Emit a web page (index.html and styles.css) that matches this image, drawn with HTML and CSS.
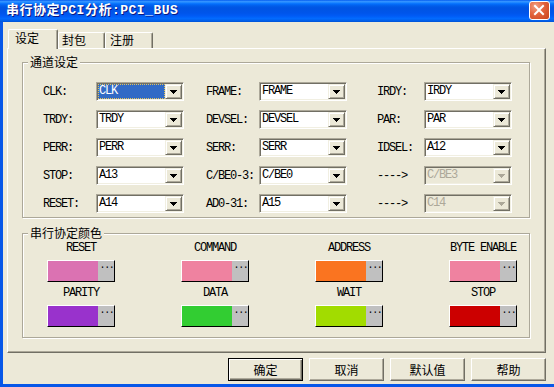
FILE: index.html
```html
<!DOCTYPE html>
<html lang="zh-CN">
<head>
<meta charset="utf-8">
<title>串行协定PCI分析:PCI_BUS</title>
<link rel="stylesheet" href="styles.css">
</head>
<body>
<div class="window">
  <div class="titlebar">
    <span class="title">串行协定PCI分析:PCI_BUS</span>
    <span class="close"><svg width="19" height="17" viewBox="0 0 19 17"><path d="M5 4L13 12M13 4L5 12" stroke="#fff" stroke-width="2" stroke-linecap="square" fill="none"/></svg></span>
  </div>
  <div class="client">
    <div class="tabs">
      <div class="tab active t1">设定</div>
      <div class="tab t2">封包</div>
      <div class="tab t3">注册</div>
    </div>
    <div class="panel">
      <div class="group g1">
        <span class="gtitle">通道设定</span>
        <div class="grid1">
          <span class="lbl">CLK:</span>
          <div class="combo focus"><span class="val"><span class="sel">CLK</span></span><span class="drop"><i class="arrow"></i></span></div>
          <span class="lbl l2">FRAME:</span>
          <div class="combo"><span class="val">FRAME</span><span class="drop"><i class="arrow"></i></span></div>
          <span class="lbl l3">IRDY:</span>
          <div class="combo"><span class="val">IRDY</span><span class="drop"><i class="arrow"></i></span></div>

          <span class="lbl">TRDY:</span>
          <div class="combo"><span class="val">TRDY</span><span class="drop"><i class="arrow"></i></span></div>
          <span class="lbl l2">DEVSEL:</span>
          <div class="combo"><span class="val">DEVSEL</span><span class="drop"><i class="arrow"></i></span></div>
          <span class="lbl l3">PAR:</span>
          <div class="combo"><span class="val">PAR</span><span class="drop"><i class="arrow"></i></span></div>

          <span class="lbl">PERR:</span>
          <div class="combo"><span class="val">PERR</span><span class="drop"><i class="arrow"></i></span></div>
          <span class="lbl l2">SERR:</span>
          <div class="combo"><span class="val">SERR</span><span class="drop"><i class="arrow"></i></span></div>
          <span class="lbl l3">IDSEL:</span>
          <div class="combo"><span class="val">A12</span><span class="drop"><i class="arrow"></i></span></div>

          <span class="lbl">STOP:</span>
          <div class="combo"><span class="val">A13</span><span class="drop"><i class="arrow"></i></span></div>
          <span class="lbl l2">C/BE0-3:</span>
          <div class="combo"><span class="val">C/BE0</span><span class="drop"><i class="arrow"></i></span></div>
          <span class="lbl l3">----&gt;</span>
          <div class="combo disabled"><span class="val">C/BE3</span><span class="drop"><i class="arrow"></i></span></div>

          <span class="lbl">RESET:</span>
          <div class="combo"><span class="val">A14</span><span class="drop"><i class="arrow"></i></span></div>
          <span class="lbl l2">AD0-31:</span>
          <div class="combo"><span class="val">A15</span><span class="drop"><i class="arrow"></i></span></div>
          <span class="lbl l3">----&gt;</span>
          <div class="combo disabled"><span class="val">C14</span><span class="drop"><i class="arrow"></i></span></div>
        </div>
      </div>
      <div class="group g2">
        <span class="gtitle">串行协定颜色</span>
        <div class="grid2">
          <div class="cell"><span class="name">RESET</span><div class="swatch"><span class="color c-reset"></span><span class="more">...</span></div></div>
          <div class="cell"><span class="name">COMMAND</span><div class="swatch"><span class="color c-command"></span><span class="more">...</span></div></div>
          <div class="cell"><span class="name">ADDRESS</span><div class="swatch"><span class="color c-address"></span><span class="more">...</span></div></div>
          <div class="cell"><span class="name">BYTE ENABLE</span><div class="swatch"><span class="color c-byte"></span><span class="more">...</span></div></div>
          <div class="cell"><span class="name">PARITY</span><div class="swatch"><span class="color c-parity"></span><span class="more">...</span></div></div>
          <div class="cell"><span class="name">DATA</span><div class="swatch"><span class="color c-data"></span><span class="more">...</span></div></div>
          <div class="cell"><span class="name">WAIT</span><div class="swatch"><span class="color c-wait"></span><span class="more">...</span></div></div>
          <div class="cell"><span class="name">STOP</span><div class="swatch"><span class="color c-stop"></span><span class="more">...</span></div></div>
        </div>
      </div>
    </div>
    <div class="buttons">
      <button class="btn default">确定</button>
      <button class="btn">取消</button>
      <button class="btn">默认值</button>
      <button class="btn">帮助</button>
    </div>
  </div>
</div>
</body>
</html>
```
FILE: styles.css
```css
* { box-sizing: border-box; }
html, body { margin: 0; padding: 0; }
body {
  width: 554px;
  height: 387px;
  overflow: hidden;
  background: #ECE9D8;
  font-family: "Liberation Mono", "Noto Sans CJK SC", monospace;
  font-size: 12px;
  color: #000;
}
.window {
  width: 554px;
  height: 387px;
  display: flex;
  flex-direction: column;
}
.titlebar {
  flex: none;
  height: 22px;
  display: flex;
  align-items: center;
  justify-content: space-between;
  padding: 0 4px 0 6px;
  background: linear-gradient(to bottom, #0058ee 0%, #3593ff 6%, #288eff 10%, #127dff 14%, #036ffc 18%, #0262ee 24%, #0057e5 32%, #0054e3 40%, #0055eb 60%, #005bf5 72%, #026afe 84%, #0062ef 92%, #0052d6 100%);
}
.title {
  color: #fff;
  font-family: "Liberation Mono", "Noto Sans CJK SC", monospace;
  font-weight: bold;
  font-size: 13px;
  letter-spacing: 0.5px;
  line-height: 16px;
  text-shadow: 1px 1px 0 #0a1883;
}
.close {
  align-self: flex-start;
  margin-top: 1px;
  width: 21px;
  height: 19px;
  display: flex;
  border: 1px solid #fff;
  border-radius: 3px;
  background: radial-gradient(circle at 30% 25%, #f3a084 0%, #e2633d 45%, #c9421b 100%);
}
.client {
  flex: 1;
  display: flex;
  flex-direction: column;
  border-left: 3px solid #0757e8;
  border-bottom: 3px solid #0757e8;
  padding: 7px 8px 0 4px;
}
.tabs {
  position: relative;
  z-index: 1;
  display: flex;
  align-items: flex-end;
  height: 19px;
  margin-left: 1px;
}
.tab {
  height: 16px;
  font-family: "Noto Sans CJK SC", sans-serif;
  font-size: 12px;
  line-height: 14px;
  background: #ECE9D8;
  border-top: 1px solid #fff;
  border-left: 1px solid #fff;
  border-right: 1px solid #716F64;
  box-shadow: inset -1px 0 0 #ACA899;
  border-radius: 2px 2px 0 0;
}
.tab.active {
  height: 20px;
  margin-bottom: -1px;
  padding-top: 1px;
}
.t1 { width: 50px; padding-left: 6px; }
.t2 { width: 47px; padding-left: 3px; }
.t3 { width: 48px; padding-left: 4px; }
.panel {
  height: 305px;
  border: 1px solid;
  border-color: #fff #716F64 #716F64 #fff;
  box-shadow: inset -1px -1px 0 #ACA899;
  padding: 13px 0 0 14px;
}
.group {
  position: relative;
  width: 508px;
  border: 1px solid #ACA899;
  box-shadow: 1px 1px 0 #fff, inset 1px 1px 0 #fff;
}
.g1 {
  height: 156px;
  padding: 19px 0 0 20px;
  margin-bottom: 15px;
}
.g2 {
  height: 105px;
  padding: 7px 0 0 24px;
}
.gtitle {
  position: absolute;
  left: 5px;
  top: -8px;
  padding: 0 2px;
  background: #ECE9D8;
  font-family: "Noto Sans CJK SC", sans-serif;
  font-size: 12px;
  line-height: 14px;
}
.grid1 {
  display: grid;
  grid-template-columns: 53px 88px 22px 53px 88px 30px 47px 88px;
  grid-auto-rows: 19px;
  row-gap: 9px;
  align-items: center;
}
.l2 { grid-column: 4; }
.l3 { grid-column: 7; }
.lbl {
  letter-spacing: -1.2px;
  line-height: 14px;
  white-space: nowrap;
}
.combo {
  width: 88px;
  height: 19px;
  display: flex;
  padding: 1px;
  background: #fff;
  border: 1px solid;
  border-color: #ACA899 #fff #fff #ACA899;
  box-shadow: inset 1px 1px 0 #716F64, inset -1px -1px 0 #F1EFE2;
}
.val {
  flex: 1;
  display: flex;
  align-items: center;
  padding-left: 1px;
  letter-spacing: -1.2px;
  line-height: 13px;
  white-space: nowrap;
}
.focus .val { padding: 0; }
.sel {
  flex: 1;
  align-self: stretch;
  display: flex;
  align-items: center;
  background: #316AC5;
  color: #fff;
  border: 1px dotted #e3c35a;
}
.drop {
  flex: none;
  width: 17px;
  display: flex;
  align-items: center;
  justify-content: center;
  background: #ECE9D8;
  border: 1px solid;
  border-color: #F1EFE2 #716F64 #716F64 #F1EFE2;
  box-shadow: inset 1px 1px 0 #fff, inset -1px -1px 0 #ACA899;
  color: #000;
}
.arrow {
  display: block;
  width: 7px;
  height: 4px;
  background:
    linear-gradient(currentColor, currentColor) 0 0 / 7px 1px no-repeat,
    linear-gradient(currentColor, currentColor) 1px 1px / 5px 1px no-repeat,
    linear-gradient(currentColor, currentColor) 2px 2px / 3px 1px no-repeat,
    linear-gradient(currentColor, currentColor) 3px 3px / 1px 1px no-repeat;
}
.disabled { background: #ECE9D8; }
.disabled .val { color: #ACA899; }
.disabled .drop { color: #ACA899; }
.grid2 {
  display: grid;
  grid-template-columns: repeat(4, 68px);
  column-gap: 66px;
  row-gap: 4px;
}
.cell {
  display: flex;
  flex-direction: column;
  align-items: center;
}
.name {
  height: 14px;
  line-height: 14px;
  margin-bottom: 5px;
  letter-spacing: -1.2px;
  white-space: nowrap;
}
.swatch {
  width: 68px;
  height: 22px;
  display: flex;
  border: 1px solid;
  border-color: #fff #000 #000 #fff;
}
.color { width: 50px; }
.more {
  flex: 1;
  background: #C0C0C0;
  font-size: 10px;
  line-height: 10px;
  letter-spacing: -1.4px;
  text-align: center;
  padding-left: 1px;
}
.c-reset { background: #DB72B2; }
.c-command { background: #EF82A0; }
.c-address { background: #FA7420; }
.c-byte { background: #EF82A0; }
.c-parity { background: #9932CC; }
.c-data { background: #32CD32; }
.c-wait { background: #A2DC00; }
.c-stop { background: #CC0000; }
.buttons {
  display: flex;
  justify-content: flex-end;
  gap: 6px;
  margin-top: 5px;
}
.btn {
  appearance: none;
  margin: 0;
  padding: 0;
  width: 75px;
  height: 23px;
  display: flex;
  align-items: center;
  justify-content: center;
  background: #ECE9D8;
  color: #000;
  font-family: "Noto Sans CJK SC", sans-serif;
  font-size: 12px;
  line-height: 14px;
  border: 1px solid;
  border-color: #fff #716F64 #716F64 #fff;
  box-shadow: inset -1px -1px 0 #ACA899;
}
.btn.default {
  border-color: #000;
  box-shadow: inset 1px 1px 0 #fff, inset -1px -1px 0 #716F64, inset -2px -2px 0 #ACA899;
}
```
